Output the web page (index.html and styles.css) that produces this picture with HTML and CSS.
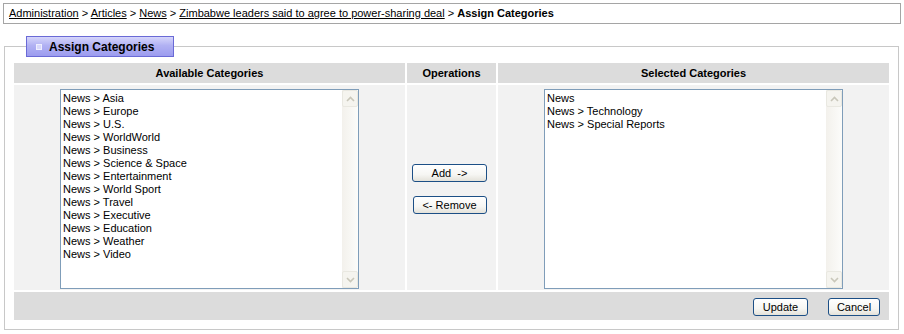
FILE: index.html
```html
<!DOCTYPE html>
<html>
<head>
<meta charset="utf-8">
<link rel="stylesheet" href="styles.css">
</head>
<body>
<div class="crumbs"><a href="#">Administration</a> &gt; <a href="#">Articles</a> &gt; <a href="#">News</a> &gt; <a href="#">Zimbabwe leaders said to agree to power-sharing deal</a> &gt; <b>Assign Categories</b></div>
<fieldset class="panel">
  <legend class="legend"><span class="legend-icon"></span><span class="legend-text">Assign Categories</span></legend>
  <div class="grid">
    <div class="head">Available Categories</div>
    <div class="head">Operations</div>
    <div class="head">Selected Categories</div>
    <div class="cell">
      <div class="listbox">
        <div class="items">
          <div>News &gt; Asia</div>
          <div>News &gt; Europe</div>
          <div>News &gt; U.S.</div>
          <div>News &gt; WorldWorld</div>
          <div>News &gt; Business</div>
          <div>News &gt; Science &amp; Space</div>
          <div>News &gt; Entertainment</div>
          <div>News &gt; World Sport</div>
          <div>News &gt; Travel</div>
          <div>News &gt; Executive</div>
          <div>News &gt; Education</div>
          <div>News &gt; Weather</div>
          <div>News &gt; Video</div>
        </div>
        <div class="scroll">
          <div class="arrow"><svg width="9" height="6" viewBox="0 0 9 6"><path d="M1 5 L4.5 1.5 L8 5" fill="none" stroke="#c9c7ba" stroke-width="1.6"/></svg></div>
          <div class="track"></div>
          <div class="arrow"><svg width="9" height="6" viewBox="0 0 9 6"><path d="M1 1 L4.5 4.5 L8 1" fill="none" stroke="#c9c7ba" stroke-width="1.6"/></svg></div>
        </div>
      </div>
    </div>
    <div class="cell ops">
      <button class="btn btn-add">Add&nbsp; -&gt;</button>
      <button class="btn btn-remove">&lt;- Remove</button>
    </div>
    <div class="cell">
      <div class="listbox">
        <div class="items">
          <div>News</div>
          <div>News &gt; Technology</div>
          <div>News &gt; Special Reports</div>
        </div>
        <div class="scroll">
          <div class="arrow"><svg width="9" height="6" viewBox="0 0 9 6"><path d="M1 5 L4.5 1.5 L8 5" fill="none" stroke="#c9c7ba" stroke-width="1.6"/></svg></div>
          <div class="track"></div>
          <div class="arrow"><svg width="9" height="6" viewBox="0 0 9 6"><path d="M1 1 L4.5 4.5 L8 1" fill="none" stroke="#c9c7ba" stroke-width="1.6"/></svg></div>
        </div>
      </div>
    </div>
    <div class="foot">
      <button class="btn btn-update">Update</button>
      <button class="btn btn-cancel">Cancel</button>
    </div>
  </div>
</fieldset>
</body>
</html>
```
FILE: styles.css
```css
html, body {
  margin: 0;
  padding: 0;
  background: #fff;
}
body {
  font-family: "Liberation Sans", Arial, sans-serif;
  font-size: 11px;
  color: #000;
}
.crumbs {
  margin: 3px 3px 0 3px;
  height: 19px;
  line-height: 19px;
  border: 1px solid #a5a5a5;
  padding-left: 5px;
  white-space: nowrap;
}
.crumbs a {
  color: #000;
  text-decoration: underline;
}
.panel {
  margin: 12px 5px 0 4px;
  padding: 6px 9px 9px 9px;
  border: 1px solid #c8c8c8;
  min-width: 0;
}
.legend {
  margin-left: 12px;
  padding: 0;
  display: flex;
  align-items: center;
  height: 19px;
  width: 146px;
  box-sizing: content-box;
  border: 1px solid #6a6ad6;
  background: linear-gradient(#d6d6fb, #b1b1f3 45%, #9c9cef);
}
.legend-icon {
  width: 4px;
  height: 4px;
  border: 1px solid #eeeeff;
  background: #d8d8fb;
  margin: 1px 7px 0 9px;
}
.legend-text {
  font-weight: bold;
  font-size: 12px;
  color: #000;
}
.grid {
  display: grid;
  grid-template-columns: 391px 89px 1fr;
  grid-template-rows: 20px 205px 28px;
  gap: 2px;
}
.head {
  background: #dcdcdc;
  font-weight: bold;
  text-align: center;
  line-height: 20px;
}
.cell {
  background: #f2f2f2;
  display: flex;
  justify-content: center;
  padding-top: 4px;
}
.ops {
  flex-direction: column;
  align-items: center;
  justify-content: center;
  padding-top: 2px;
  gap: 14px;
}
.listbox {
  width: 297px;
  height: 198px;
  border: 1px solid #7f9db9;
  background: #fff;
  display: flex;
}
.items {
  flex: 1;
  padding: 2px 0 0 2px;
  line-height: 13px;
  white-space: nowrap;
}
.scroll {
  width: 16px;
  display: flex;
  flex-direction: column;
  background: linear-gradient(90deg, #f3f1ec, #fcfcfa);
}
.arrow {
  height: 15px;
  border: 1px solid #e9e8e1;
  border-radius: 2px;
  background: #f5f4ef;
  display: flex;
  align-items: center;
  justify-content: center;
}
.track {
  flex: 1;
}
.foot {
  grid-column: 1 / 4;
  background: #dcdcdc;
  display: flex;
  justify-content: flex-end;
  align-items: center;
  padding: 1px 9px 0 0;
  gap: 20px;
}
.btn {
  font-family: "Liberation Sans", Arial, sans-serif;
  font-size: 11px;
  color: #000;
  height: 18px;
  padding: 0;
  border: 1px solid #1c4f86;
  border-radius: 3px;
  background: linear-gradient(#ffffff, #f6f6f3 60%, #e4e2da);
  line-height: 16px;
}
.btn-add { width: 75px; margin-right: 4px; }
.btn-remove { width: 74px; margin-left: -4px; }
.btn-update { width: 55px; }
.btn-cancel { width: 52px; }
```
